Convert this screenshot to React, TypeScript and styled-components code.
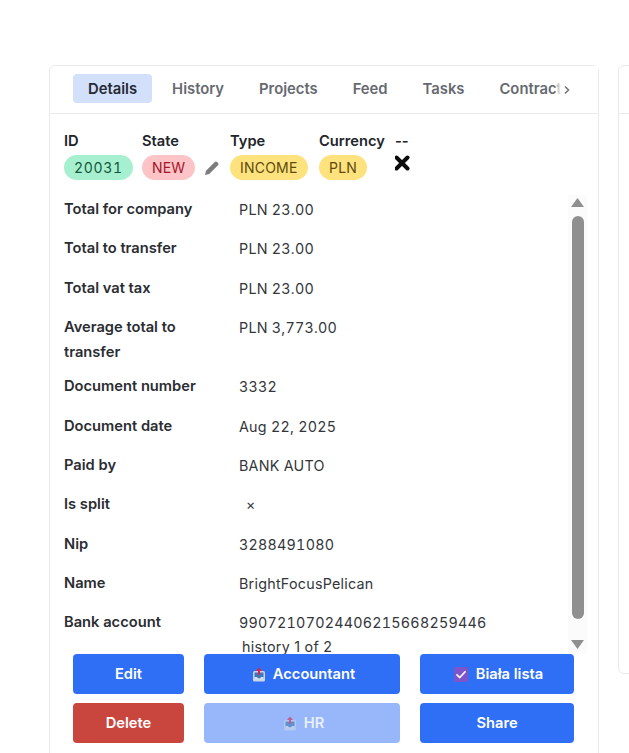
import React from "react";
import styled, { createGlobalStyle } from "styled-components";

const Global = createGlobalStyle`
  html, body { margin: 0; padding: 0; background: #fff; }
  body { font-family: Inter, "Liberation Sans", sans-serif; color: #1f2328; }
  #root { height: 753px; overflow: hidden; }
`;

const Page = styled.div`
  height: 753px;
  box-sizing: border-box;
  padding: 65px 0 0 49px;
  display: flex;
  gap: 19px;
  overflow: hidden;
`;

const Card = styled.section`
  flex: 0 0 550px;
  box-sizing: border-box;
  height: 720px;
  border: 1px solid #e9eaec;
  border-radius: 6px;
  background: #fff;
  display: flex;
  flex-direction: column;
`;

const SideCard = styled.aside`
  flex: 0 0 40px;
  box-sizing: border-box;
  height: 609px;
  border: 1px solid #e9eaec;
  border-radius: 6px;
`;

const SideHead = styled.div`
  height: 47px;
  border-bottom: 1px solid #e9eaec;
`;

const Tabs = styled.nav`
  height: 48px;
  flex: none;
  box-sizing: border-box;
  border-bottom: 1px solid #e9eaec;
  padding: 8px 0 0 23px;
  display: flex;
  gap: 5px;
  position: relative;
  overflow: hidden;
`;

const Tab = styled.div<{ $active?: boolean }>`
  height: 29px;
  box-sizing: border-box;
  padding: 0 15px;
  border-radius: 4px;
  display: flex;
  align-items: center;
  font-size: 14.8px;
  font-weight: 600;
  white-space: nowrap;
  background: ${(p) => (p.$active ? "#d3e0fb" : "transparent")};
  color: ${(p) => (p.$active ? "#252a33" : "#666a70")};
`;

const TabFade = styled.div`
  position: absolute;
  right: 0;
  top: 0;
  bottom: 0;
  width: 44px;
  background: linear-gradient(to right, rgba(255,255,255,0) 0, #fff 7px);
  display: flex;
  align-items: center;
  padding-left: 9px;
  box-sizing: border-box;
`;

const Summary = styled.div`
  flex: none;
  height: 81px;
  box-sizing: border-box;
  padding: 18px 0 0 14px;
  display: flex;
`;

const Field = styled.div<{ $w: number }>`
  width: ${(p) => p.$w}px;
  flex: none;
`;

const FieldLabel = styled.div`
  font-size: 14.7px;
  font-weight: 600;
  line-height: 18px;
  color: #22252a;
  margin-bottom: 5px;
  white-space: nowrap;
`;

const Badge = styled.span<{ $bg: string; $fg: string; $num?: boolean }>`
  display: inline-flex;
  align-items: center;
  height: 25px;
  padding: 0 10px;
  border-radius: 13px;
  font-size: 14px;
  font-variant-numeric: tabular-nums;
  letter-spacing: ${(p) => (p.$num ? "0.7px" : "0.2px")};
  background: ${(p) => p.$bg};
  color: ${(p) => p.$fg};
`;

const BadgeLine = styled.div`
  display: flex;
  align-items: center;
  gap: 9px;
`;

const ScrollRegion = styled.div`
  flex: none;
  height: 459px;
  display: flex;
  padding-left: 14px;
`;

const List = styled.div`
  flex: 1;
  min-width: 0;
  overflow: hidden;
`;

const ListContent = styled.div`
  margin-top: -5px;
`;

const Row = styled.div<{ $wrapped?: boolean }>`
  display: grid;
  grid-template-columns: 175px 1fr;
  padding: 7px 0;
  margin-bottom: ${(p) => (p.$wrapped ? "-5px" : "0")};
  font-size: 14.7px;
  line-height: 25.3px;
`;

const Label = styled.div`
  font-weight: 600;
  color: #2a2d32;
  width: 140px;
`;

const Value = styled.div`
  color: #33363b;
  font-size: 14.3px;
  font-variant-numeric: tabular-nums;
  letter-spacing: 0.25px;
  white-space: nowrap;
`;

const Mark = styled.span`
  padding-left: 7px;
`;

const HistoryLine = styled.div`
  padding-left: 178px;
  margin-top: -6px;
  font-size: 14.3px;
  line-height: 20px;
  color: #33363b;
  letter-spacing: 0.25px;
`;

const Scrollbar = styled.div`
  flex: none;
  width: 19px;
  margin-right: 11px;
  background: #fbfbfb;
  display: flex;
  flex-direction: column;
  align-items: center;
  padding: 3px 0 5px;
  box-sizing: border-box;
`;

const Thumb = styled.div`
  width: 12px;
  flex: 1;
  margin: 9px 0 21px;
  border-radius: 6px;
  background: #8f8f8f;
`;

const Actions = styled.div`
  flex: none;
  display: grid;
  grid-template-columns: 111px 196px 154px;
  column-gap: 20px;
  row-gap: 9px;
  padding: 0 0 0 23px;
`;

const Btn = styled.button<{ $bg: string; $dim?: boolean; $shift?: number }>`
  height: 40px;
  border: none;
  border-radius: 4px;
  background: ${(p) => p.$bg};
  color: ${(p) => (p.$dim ? "#e9effd" : "#fff")};
  font-family: Inter, "Liberation Sans", sans-serif;
  font-size: 14.7px;
  font-weight: 600;
  display: flex;
  align-items: center;
  justify-content: center;
  gap: 8px;
  padding: 0 0 0 ${(p) => p.$shift ?? 0}px;
`;

const Tray = ({ dim }: { dim?: boolean }) => (
  <svg width="12" height="15" viewBox="0 0 12 15" style={{ opacity: dim ? 0.6 : 1 }}>
    <rect x="0" y="4" width="12" height="10.5" rx="1.5" fill="#c9d5e6" />
    <rect x="1.5" y="5.5" width="9" height="6" fill="#3f78b8" />
    <path d="M1.5 10h2.5l1 1.5h2l1-1.5h2.5v2.5h-9z" fill="#d6e0ee" />
    <path d="M6 0.5 9 4H7v4H5V4H3z" fill="#d8264a" />
  </svg>
);

const Check = () => (
  <svg width="14" height="15" viewBox="0 0 14 15">
    <rect width="14" height="15" rx="1.5" fill="#7b55c9" />
    <path d="M3 7.8 5.8 10.5 11 4.8" fill="none" stroke="#f3eefc" strokeWidth="1.8" strokeLinecap="round" strokeLinejoin="round" />
  </svg>
);

const Pencil = () => (
  <svg width="16" height="16" viewBox="0 0 16 16">
    <path d="M1 15l1-4.2L10.8 2a1.6 1.6 0 0 1 2.3 0l.9.9a1.6 1.6 0 0 1 0 2.3L5.2 14z" fill="#7d7d7d" />
  </svg>
);

const Cross = () => (
  <svg width="16" height="16" viewBox="0 0 16 16">
    <path d="M1.5 2.5 12.5 13.5M12.5 2.5 1.5 13.5" stroke="#0b0b0b" strokeWidth="4" strokeLinecap="round" />
  </svg>
);

const Chevron = () => (
  <svg width="8" height="10" viewBox="0 0 8 10">
    <path d="M2 1.5l3.5 3.5L2 8.5" fill="none" stroke="#777" strokeWidth="1.6" />
  </svg>
);

const ArrowUp = () => (
  <svg width="13" height="9" viewBox="0 0 13 9">
    <path d="M6.5 0 13 9H0z" fill="#8f8f8f" />
  </svg>
);

const ArrowDown = () => (
  <svg width="13" height="9" viewBox="0 0 13 9">
    <path d="M0 0h13L6.5 9z" fill="#8f8f8f" />
  </svg>
);

const rows: [string, React.ReactNode][] = [
  ["Total for company", "PLN 23.00"],
  ["Total to transfer", "PLN 23.00"],
  ["Total vat tax", "PLN 23.00"],
  ["Average total to transfer", "PLN 3,773.00"],
  ["Document number", "3332"],
  ["Document date", "Aug 22, 2025"],
  ["Paid by", "BANK AUTO"],
  ["Is split", <Mark key="x">×</Mark>],
  ["Nip", "3288491080"],
  ["Name", "BrightFocusPelican"],
  ["Bank account", "99072107024406215668259446"],
];

export default function App() {
  return (
    <>
      <Global />
      <Page>
        <Card>
          <Tabs>
            <Tab $active>Details</Tab>
            <Tab>History</Tab>
            <Tab>Projects</Tab>
            <Tab>Feed</Tab>
            <Tab>Tasks</Tab>
            <Tab>Contracts</Tab>
            <TabFade><Chevron /></TabFade>
          </Tabs>
          <Summary>
            <Field $w={78}>
              <FieldLabel>ID</FieldLabel>
              <Badge $num $bg="#a7f0cf" $fg="#14573c">20031</Badge>
            </Field>
            <Field $w={88}>
              <FieldLabel>State</FieldLabel>
              <BadgeLine>
                <Badge $bg="#fdc4c7" $fg="#a3142a">NEW</Badge>
                <Pencil />
              </BadgeLine>
            </Field>
            <Field $w={89}>
              <FieldLabel>Type</FieldLabel>
              <Badge $bg="#fde27e" $fg="#5e4a0c">INCOME</Badge>
            </Field>
            <Field $w={76}>
              <FieldLabel>Currency</FieldLabel>
              <Badge $bg="#fde27e" $fg="#5e4a0c">PLN</Badge>
            </Field>
            <Field $w={30}>
              <FieldLabel>--</FieldLabel>
              <Cross />
            </Field>
          </Summary>
          <ScrollRegion>
            <List>
              <ListContent>
                {rows.map(([k, v], i) => (
                  <Row key={k} $wrapped={i === 3}>
                    <Label>{k}</Label>
                    <Value>{v}</Value>
                  </Row>
                ))}
                <HistoryLine>history 1 of 2</HistoryLine>
              </ListContent>
            </List>
            <Scrollbar>
              <ArrowUp />
              <Thumb />
              <ArrowDown />
            </Scrollbar>
          </ScrollRegion>
          <Actions>
            <Btn $bg="#2f6ff6">Edit</Btn>
            <Btn $bg="#2f6ff6" $shift={4}><Tray />Accountant</Btn>
            <Btn $bg="#2f6ff6" $shift={3}><Check />Biała lista</Btn>
            <Btn $bg="#c9463f">Delete</Btn>
            <Btn $bg="#97b7fa" $dim $shift={4}><Tray dim />HR</Btn>
            <Btn $bg="#2f6ff6">Share</Btn>
          </Actions>
        </Card>
        <SideCard><SideHead /></SideCard>
      </Page>
    </>
  );
}
